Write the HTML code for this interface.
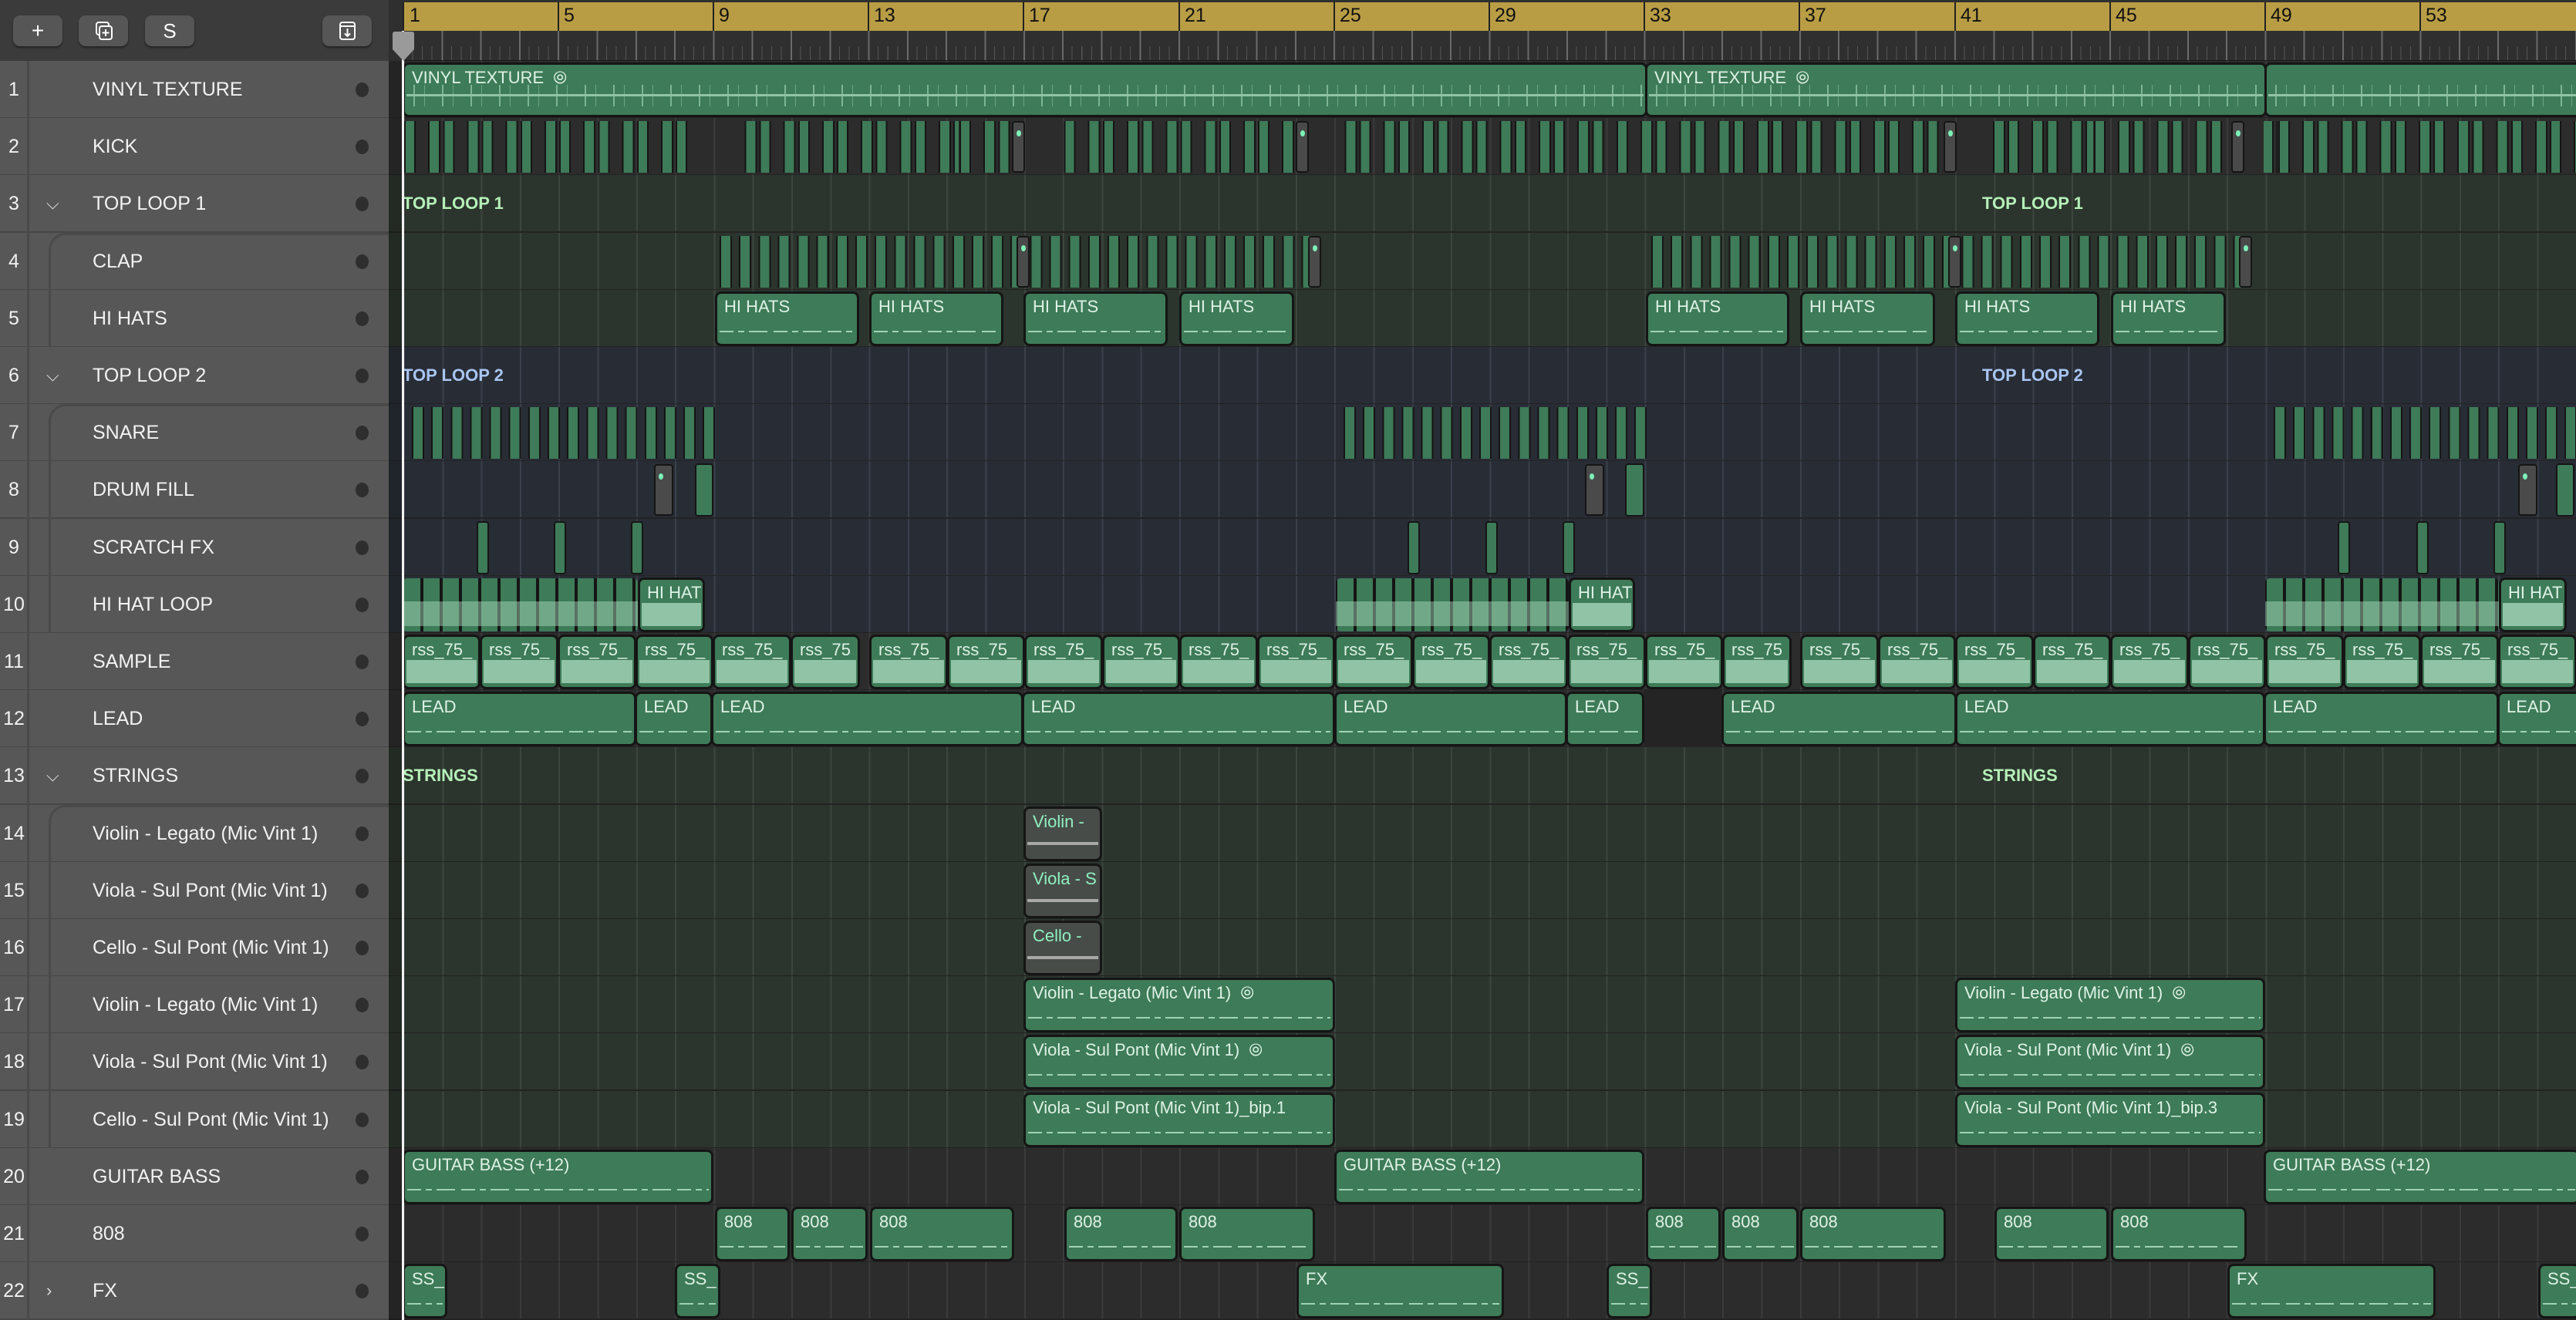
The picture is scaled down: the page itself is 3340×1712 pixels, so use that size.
<!DOCTYPE html>
<html><head><meta charset="utf-8"><style>
*{margin:0;padding:0;box-sizing:border-box}
body{width:3340px;height:1712px;overflow:hidden;background:#2c2c2c;font-family:"Liberation Sans",sans-serif;position:relative}
.abs{position:absolute}
.r{position:absolute;left:0;width:3340px;height:75px}
.tl{position:absolute;left:504px;right:0;top:0;height:75px;border-bottom:2px solid #232323;background-image:repeating-linear-gradient(90deg,transparent 0 19px,var(--l) 19px 21px,transparent 21px 50.3px)}
.gy{background-color:#2c2c2c;--l:#3b3b3b}
.gn{background-color:#2b342d;--l:#3c463f}
.bl{background-color:#282c35;--l:#3a404b}
.sb{position:absolute;left:0;top:0;width:504px;height:75px;background:#575757;border-bottom:2px solid #474747;color:#f2f2f2;font-size:25px;line-height:74px}
.num{position:absolute;left:0;width:36px;text-align:center;font-size:25px}
.nm{position:absolute;left:120px}
.dot{position:absolute;left:461px;top:28px;width:17px;height:19px;border-radius:50%;background:#2e2e2e}
.ch{position:absolute;left:60px;top:0;font-size:22px;color:#ddd}
.c{position:absolute;top:2px;height:71px;background:#3e7b58;border:3px solid #151515;border-radius:8px;overflow:hidden;color:#def2e6;font-size:22px;line-height:24px;padding:5px 0 0 9px;white-space:nowrap}
.m::after{content:"";position:absolute;left:3px;right:3px;top:48px;height:2px;background:repeating-linear-gradient(90deg,#9fd3b4 0 18px,transparent 18px 24px,#9fd3b4 24px 32px,transparent 32px 38px,#9fd3b4 38px 62px,transparent 62px 70px)}
.w::after{content:"";position:absolute;left:2px;right:2px;top:30px;height:30px;background:#a6d6bb;opacity:.8}
.v::after{content:"";position:absolute;left:2px;right:2px;top:26px;height:28px;background:linear-gradient(180deg,transparent 0 12px,#8fc3a4 12px 15px,transparent 15px),repeating-linear-gradient(90deg,transparent 0 9px,rgba(150,205,175,.7) 9px 11px,transparent 11px 23px,rgba(150,205,175,.5) 23px 24px,transparent 24px 37px)}
.gc{background:#474c49;color:#8ff0c0}
.gc::after{content:"";position:absolute;left:2px;right:2px;top:43px;height:4px;background:#a8a8a8}
.k{position:absolute;top:4px;height:67px;background-image:repeating-linear-gradient(90deg,transparent 0 1px,#151515 1px 3px,#3e7b58 3px 14px,#151515 14px 16px,transparent 16px 32px,#151515 32px 34px,#3e7b58 34px 46px,#151515 46px 48px,transparent 48px 50.3px)}
.p{position:absolute;top:4px;height:67px;background-image:repeating-linear-gradient(90deg,#151515 0 2px,#3e7b58 2px 14px,#151515 14px 16px,transparent 16px 25.15px)}
.hl{position:absolute;top:3px;height:69px;background-image:linear-gradient(180deg,transparent 0 30px,rgba(175,225,195,.45) 30px 62px,transparent 62px),repeating-linear-gradient(90deg,#151515 0 2px,#3e7b58 2px 23px,#151515 23px 25px);border-radius:6px}
.gk{position:absolute;top:4px;height:67px;width:17px;background:#4a4a4a;border:2px solid #151515;border-radius:4px}
.gk::before{content:"";position:absolute;left:4px;top:10px;width:6px;height:8px;border-radius:50%;background:#7ef0b8}
.sc{position:absolute;top:3px;height:69px;width:16px;background:#3e7b58;border:2px solid #151515;border-radius:4px}
.fl{position:absolute;left:522px;font-weight:bold;font-size:22px;line-height:74px}
.btn{position:absolute;top:20px;height:40px;width:64px;background:#565656;border-radius:9px;box-shadow:0 2px 2px #222;color:#fff;text-align:center;font-size:28px;line-height:40px}
.rn{position:absolute;top:6px;font-size:25px;color:#111}
.rl{position:absolute;top:3px;width:2px;height:37px;background:#222}
</style></head><body>

<div class="abs" style="left:0;top:0;width:504px;height:79px;background:#3b3b3b;box-shadow:0 3px 4px #222"></div>
<div class="btn" style="left:17px">+</div>
<div class="btn" style="left:102px"><svg width="40" height="40" viewBox="0 0 40 40"><rect x="11" y="9" width="16" height="16" rx="3" fill="none" stroke="#fff" stroke-width="2"/><rect x="15" y="14" width="16" height="17" rx="3" fill="#565656" stroke="#fff" stroke-width="2"/><path d="M23 18v9M18.5 22.5h9" stroke="#fff" stroke-width="2"/></svg></div>
<div class="btn" style="left:188px;font-size:26px">S</div>
<div class="btn" style="left:418px"><svg width="40" height="40" viewBox="0 0 40 40"><rect x="11" y="9" width="19" height="22" rx="3" fill="none" stroke="#fff" stroke-width="2"/><path d="M11 14h19M20.5 17v10M17 23.5l3.5 3.5 3.5-3.5" fill="none" stroke="#fff" stroke-width="2"/></svg></div>

<div class="abs" style="left:504px;top:0;width:2836px;height:79px;background:#2f2f2f"></div>
<div class="abs" style="left:522px;top:3px;width:2818px;height:37px;background:#b99d45"></div>
<div class="abs" style="left:522px;top:40px;width:2818px;height:38px;background-image:repeating-linear-gradient(90deg,#6a6a6a 0 2px,transparent 2px 50.3px),repeating-linear-gradient(90deg,#555 0 1px,transparent 1px 12.575px);background-size:100% 100%,100% 50%;background-position:0 0,0 100%;background-repeat:no-repeat"></div>
<div class="abs" style="left:522px;top:40px;width:2818px;height:20px;background:#2f2f2f;background-image:repeating-linear-gradient(90deg,#6a6a6a 0 2px,transparent 2px 50.3px)"></div>
<div class="abs" style="left:522px;top:78px;width:2818px;height:1px;background:#1a1a1a"></div>
<div class="rl" style="left:522px"></div><div class="rn" style="left:531px">1</div>
<div class="rl" style="left:723px"></div><div class="rn" style="left:731px">5</div>
<div class="rl" style="left:924px"></div><div class="rn" style="left:932px">9</div>
<div class="rl" style="left:1125px"></div><div class="rn" style="left:1133px">13</div>
<div class="rl" style="left:1326px"></div><div class="rn" style="left:1334px">17</div>
<div class="rl" style="left:1528px"></div><div class="rn" style="left:1536px">21</div>
<div class="rl" style="left:1729px"></div><div class="rn" style="left:1737px">25</div>
<div class="rl" style="left:1930px"></div><div class="rn" style="left:1938px">29</div>
<div class="rl" style="left:2131px"></div><div class="rn" style="left:2139px">33</div>
<div class="rl" style="left:2332px"></div><div class="rn" style="left:2340px">37</div>
<div class="rl" style="left:2534px"></div><div class="rn" style="left:2542px">41</div>
<div class="rl" style="left:2735px"></div><div class="rn" style="left:2743px">45</div>
<div class="rl" style="left:2936px"></div><div class="rn" style="left:2944px">49</div>
<div class="rl" style="left:3137px"></div><div class="rn" style="left:3145px">53</div>

<div class="r" style="top:79px"><div class="tl gy"></div><div class="sb"><span class="num">1</span><span class="nm">VINYL TEXTURE</span><i class="dot"></i></div>
<div class="c v" style="left:522px;width:1614px">VINYL TEXTURE &nbsp;⦾</div><div class="c v" style="left:2133px;width:806px">VINYL TEXTURE &nbsp;⦾</div><div class="c v" style="left:2936px;width:420px"></div></div>

<div class="r" style="top:153px"><div class="tl gy"></div><div class="sb"><span class="num">2</span><span class="nm">KICK</span><i class="dot"></i></div>
<div class="k" style="left:523px;width:382px"></div><div class="k" style="left:952px;width:360px;background-position:-429px 0"></div><div class="k" style="left:1378px;width:302px;background-position:-855px 0"></div><div class="k" style="left:1736px;width:786px;background-position:-1213px 0"></div><div class="k" style="left:2582px;width:313px;background-position:-2059px 0"></div><div class="k" style="left:2935px;width:405px;background-position:-2412px 0"></div>
<div class="gk" style="left:1312px"></div><div class="gk" style="left:1680px"></div><div class="gk" style="left:2520px"></div><div class="gk" style="left:2893px"></div></div>

<div class="r" style="top:227px"><div class="tl gn"></div><div class="sb"><span class="num">3</span><span class="ch">⌵</span><span class="nm">TOP LOOP 1</span><i class="dot"></i></div>
<div class="fl" style="color:#b5f0b8">TOP LOOP 1</div><div class="fl" style="left:2570px;color:#b5f0b8">TOP LOOP 1</div></div>

<div class="r" style="top:302px"><div class="tl gn"></div><div class="sb"><span class="num">4</span><span class="nm">CLAP</span><i class="dot"></i></div>
<div class="p" style="left:933px;width:768px"></div><div class="p" style="left:2141px;width:768px"></div>
<div class="gk" style="left:1318px"></div><div class="gk" style="left:1696px"></div><div class="gk" style="left:2526px"></div><div class="gk" style="left:2903px"></div></div>

<div class="r" style="top:376px"><div class="tl gn"></div><div class="sb"><span class="num">5</span><span class="nm">HI HATS</span><i class="dot"></i></div>
<div class="c m" style="left:927px;width:187px">HI HATS</div><div class="c m" style="left:1127px;width:174px">HI HATS</div><div class="c m" style="left:1327px;width:187px">HI HATS</div><div class="c m" style="left:1529px;width:149px">HI HATS</div>
<div class="c m" style="left:2134px;width:186px">HI HATS</div><div class="c m" style="left:2334px;width:175px">HI HATS</div><div class="c m" style="left:2535px;width:187px">HI HATS</div><div class="c m" style="left:2737px;width:149px">HI HATS</div></div>

<div class="r" style="top:450px"><div class="tl bl"></div><div class="sb"><span class="num">6</span><span class="ch">⌵</span><span class="nm">TOP LOOP 2</span><i class="dot"></i></div>
<div class="fl" style="color:#a9c6f2">TOP LOOP 2</div><div class="fl" style="left:2570px;color:#a9c6f2">TOP LOOP 2</div></div>

<div class="r" style="top:524px"><div class="tl bl"></div><div class="sb"><span class="num">7</span><span class="nm">SNARE</span><i class="dot"></i></div>
<div class="p" style="left:534px;width:396px"></div><div class="p" style="left:1742px;width:393px"></div><div class="p" style="left:2948px;width:392px"></div></div>

<div class="r" style="top:598px"><div class="tl bl"></div><div class="sb"><span class="num">8</span><span class="nm">DRUM FILL</span><i class="dot"></i></div>
<div class="gk" style="left:848px;width:25px"></div><div class="sc" style="left:901px;width:24px"></div>
<div class="gk" style="left:2055px;width:25px"></div><div class="sc" style="left:2107px;width:25px"></div>
<div class="gk" style="left:3265px;width:25px"></div><div class="sc" style="left:3314px;width:24px"></div></div>

<div class="r" style="top:673px"><div class="tl bl"></div><div class="sb"><span class="num">9</span><span class="nm">SCRATCH FX</span><i class="dot"></i></div>
<div class="sc" style="left:618px"></div><div class="sc" style="left:718px"></div><div class="sc" style="left:818px"></div><div class="sc" style="left:1825px"></div><div class="sc" style="left:1926px"></div><div class="sc" style="left:2026px"></div><div class="sc" style="left:3031px"></div><div class="sc" style="left:3133px"></div><div class="sc" style="left:3233px"></div></div>

<div class="r" style="top:747px"><div class="tl bl"></div><div class="sb"><span class="num">10</span><span class="nm">HI HAT LOOP</span><i class="dot"></i></div>
<div class="hl" style="left:522px;width:305px"></div><div class="c w" style="left:827px;width:87px">HI HAT</div>
<div class="hl" style="left:1732px;width:302px"></div><div class="c w" style="left:2034px;width:86px">HI HAT</div>
<div class="hl" style="left:2937px;width:303px"></div><div class="c w" style="left:3240px;width:88px">HI HAT</div></div>

<div class="r" style="top:821px"><div class="tl gy"></div><div class="sb"><span class="num">11</span><span class="nm">SAMPLE</span><i class="dot"></i></div>
<div class="c w" style="left:522px;width:101px">rss_75_</div><div class="c w" style="left:622px;width:102px">rss_75_</div><div class="c w" style="left:723px;width:102px">rss_75_</div><div class="c w" style="left:824px;width:101px">rss_75_</div><div class="c w" style="left:924px;width:102px">rss_75_</div><div class="c w" style="left:1025px;width:90px">rss_75</div>
<div class="c w" style="left:1127px;width:102px">rss_75_</div><div class="c w" style="left:1228px;width:101px">rss_75_</div><div class="c w" style="left:1328px;width:102px">rss_75_</div><div class="c w" style="left:1429px;width:101px">rss_75_</div><div class="c w" style="left:1529px;width:102px">rss_75_</div><div class="c w" style="left:1630px;width:101px">rss_75_</div><div class="c w" style="left:1730px;width:102px">rss_75_</div><div class="c w" style="left:1831px;width:101px">rss_75_</div><div class="c w" style="left:1931px;width:102px">rss_75_</div><div class="c w" style="left:2032px;width:102px">rss_75_</div><div class="c w" style="left:2133px;width:101px">rss_75_</div><div class="c w" style="left:2233px;width:90px">rss_75</div>
<div class="c w" style="left:2334px;width:102px">rss_75_</div><div class="c w" style="left:2435px;width:101px">rss_75_</div><div class="c w" style="left:2535px;width:102px">rss_75_</div><div class="c w" style="left:2636px;width:101px">rss_75_</div><div class="c w" style="left:2736px;width:102px">rss_75_</div><div class="c w" style="left:2837px;width:101px">rss_75_</div><div class="c w" style="left:2937px;width:102px">rss_75_</div><div class="c w" style="left:3038px;width:101px">rss_75_</div><div class="c w" style="left:3138px;width:102px">rss_75_</div><div class="c w" style="left:3239px;width:102px">rss_75_</div></div>

<div class="r" style="top:895px"><div class="tl gy"></div><div class="sb"><span class="num">12</span><span class="nm">LEAD</span><i class="dot"></i></div>
<div class="abs" style="left:2132px;top:0;width:100px;height:74px;background:#242424"></div>
<div class="c m" style="left:522px;width:303px">LEAD</div><div class="c m" style="left:823px;width:101px">LEAD</div><div class="c m" style="left:922px;width:405px">LEAD</div><div class="c m" style="left:1325px;width:406px">LEAD</div><div class="c m" style="left:1730px;width:302px">LEAD</div><div class="c m" style="left:2030px;width:102px">LEAD</div>
<div class="c m" style="left:2232px;width:305px">LEAD</div><div class="c m" style="left:2535px;width:402px">LEAD</div><div class="c m" style="left:2935px;width:305px">LEAD</div><div class="c m" style="left:3238px;width:110px">LEAD</div></div>

<div class="r" style="top:969px"><div class="tl gn"></div><div class="sb"><span class="num">13</span><span class="ch">⌵</span><span class="nm">STRINGS</span><i class="dot"></i></div>
<div class="fl" style="color:#b5f0b8">STRINGS</div><div class="fl" style="left:2570px;color:#b5f0b8">STRINGS</div></div>

<div class="r" style="top:1044px"><div class="tl gn"></div><div class="sb"><span class="num">14</span><span class="nm">Violin - Legato (Mic Vint 1)</span><i class="dot"></i></div><div class="c gc" style="left:1327px;width:102px">Violin -</div></div>
<div class="r" style="top:1118px"><div class="tl gn"></div><div class="sb"><span class="num">15</span><span class="nm">Viola - Sul Pont (Mic Vint 1)</span><i class="dot"></i></div><div class="c gc" style="left:1327px;width:102px">Viola - S</div></div>
<div class="r" style="top:1192px"><div class="tl gn"></div><div class="sb"><span class="num">16</span><span class="nm">Cello - Sul Pont (Mic Vint 1)</span><i class="dot"></i></div><div class="c gc" style="left:1327px;width:102px">Cello -</div></div>
<div class="r" style="top:1266px"><div class="tl gn"></div><div class="sb"><span class="num">17</span><span class="nm">Violin - Legato (Mic Vint 1)</span><i class="dot"></i></div><div class="c m" style="left:1327px;width:404px">Violin - Legato (Mic Vint 1) &nbsp;⦾</div><div class="c m" style="left:2535px;width:402px">Violin - Legato (Mic Vint 1) &nbsp;⦾</div></div>
<div class="r" style="top:1340px"><div class="tl gn"></div><div class="sb"><span class="num">18</span><span class="nm">Viola - Sul Pont (Mic Vint 1)</span><i class="dot"></i></div><div class="c m" style="left:1327px;width:404px">Viola - Sul Pont (Mic Vint 1) &nbsp;⦾</div><div class="c m" style="left:2535px;width:402px">Viola - Sul Pont (Mic Vint 1) &nbsp;⦾</div></div>
<div class="r" style="top:1415px"><div class="tl gn"></div><div class="sb"><span class="num">19</span><span class="nm">Cello - Sul Pont (Mic Vint 1)</span><i class="dot"></i></div><div class="c m" style="left:1327px;width:404px">Viola - Sul Pont (Mic Vint 1)_bip.1</div><div class="c m" style="left:2535px;width:402px">Viola - Sul Pont (Mic Vint 1)_bip.3</div></div>

<div class="r" style="top:1489px"><div class="tl gy"></div><div class="sb"><span class="num">20</span><span class="nm">GUITAR BASS</span><i class="dot"></i></div>
<div class="c m" style="left:522px;width:403px">GUITAR BASS (+12)</div><div class="c m" style="left:1730px;width:402px">GUITAR BASS (+12)</div><div class="c m" style="left:2935px;width:410px">GUITAR BASS (+12)</div></div>

<div class="r" style="top:1563px"><div class="tl gy"></div><div class="sb"><span class="num">21</span><span class="nm">808</span><i class="dot"></i></div>
<div class="c m" style="left:927px;width:97px">808</div><div class="c m" style="left:1026px;width:99px">808</div><div class="c m" style="left:1128px;width:187px">808</div><div class="c m" style="left:1380px;width:147px">808</div><div class="c m" style="left:1529px;width:176px">808</div>
<div class="c m" style="left:2134px;width:97px">808</div><div class="c m" style="left:2233px;width:99px">808</div><div class="c m" style="left:2334px;width:189px">808</div><div class="c m" style="left:2586px;width:148px">808</div><div class="c m" style="left:2737px;width:176px">808</div></div>

<div class="r" style="top:1637px"><div class="tl gy"></div><div class="sb"><span class="num">22</span><span class="ch">›</span><span class="nm">FX</span><i class="dot"></i></div>
<div class="c m" style="left:522px;width:58px">SS_</div><div class="c m" style="left:875px;width:59px">SS_</div><div class="c m" style="left:1681px;width:269px">FX</div><div class="c m" style="left:2083px;width:59px">SS_</div><div class="c m" style="left:2888px;width:270px">FX</div><div class="c m" style="left:3291px;width:55px">SS_</div></div>

<div class="abs" style="left:35px;top:79px;width:3px;height:1633px;background:#4a4a4a"></div>
<div class="abs" style="left:63px;top:302px;width:441px;height:148px;border-left:3px solid #4a4a4a;border-top:3px solid #4a4a4a;border-top-left-radius:22px"></div>
<div class="abs" style="left:63px;top:524px;width:441px;height:297px;border-left:3px solid #4a4a4a;border-top:3px solid #4a4a4a;border-top-left-radius:22px"></div>
<div class="abs" style="left:63px;top:1044px;width:441px;height:445px;border-left:3px solid #4a4a4a;border-top:3px solid #4a4a4a;border-top-left-radius:22px"></div>
<div class="abs" style="left:504px;top:79px;width:18px;height:1633px;background:rgba(0,0,0,.18)"></div>

<div class="abs" style="left:521px;top:40px;width:3px;height:1672px;background:#f2f2f2"></div>
<svg class="abs" style="left:506px;top:40px" width="34" height="40" viewBox="0 0 34 40"><path d="M3 4q0-3 3-3h22q3 0 3 3v20l-14 15-14-15z" fill="#9a9a9a"/></svg>
</body></html>
